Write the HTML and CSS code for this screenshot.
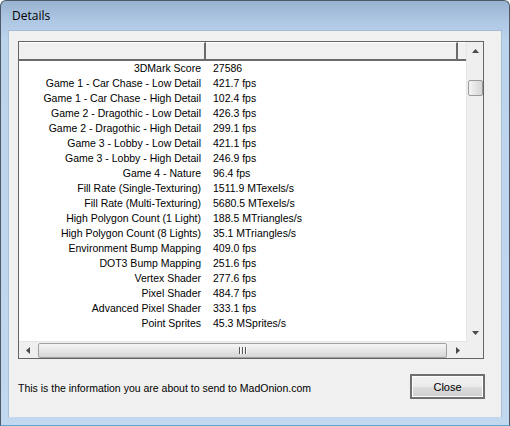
FILE: index.html
```html
<!DOCTYPE html>
<html>
<head>
<meta charset="utf-8">
<link rel="stylesheet" href="styles.css">
</head>
<body>
<div class="window">
  <div class="titlebar"><span class="title">Details</span></div>
  <div class="client">
    <div class="list">
      <div class="content">
        <div class="header">
          <div class="hcell c1"></div>
          <div class="hcell c2"></div>
          <div class="hcell c3"></div>
        </div>
        <div class="rows">
          <div class="row"><span class="k">3DMark Score</span><span class="v">27586</span></div>
          <div class="row"><span class="k">Game 1 - Car Chase - Low Detail</span><span class="v">421.7 fps</span></div>
          <div class="row"><span class="k">Game 1 - Car Chase - High Detail</span><span class="v">102.4 fps</span></div>
          <div class="row"><span class="k">Game 2 - Dragothic - Low Detail</span><span class="v">426.3 fps</span></div>
          <div class="row"><span class="k">Game 2 - Dragothic - High Detail</span><span class="v">299.1 fps</span></div>
          <div class="row"><span class="k">Game 3 - Lobby - Low Detail</span><span class="v">421.1 fps</span></div>
          <div class="row"><span class="k">Game 3 - Lobby - High Detail</span><span class="v">246.9 fps</span></div>
          <div class="row"><span class="k">Game 4 - Nature</span><span class="v">96.4 fps</span></div>
          <div class="row"><span class="k">Fill Rate (Single-Texturing)</span><span class="v">1511.9 MTexels/s</span></div>
          <div class="row"><span class="k">Fill Rate (Multi-Texturing)</span><span class="v">5680.5 MTexels/s</span></div>
          <div class="row"><span class="k">High Polygon Count (1 Light)</span><span class="v">188.5 MTriangles/s</span></div>
          <div class="row"><span class="k">High Polygon Count (8 Lights)</span><span class="v">35.1 MTriangles/s</span></div>
          <div class="row"><span class="k">Environment Bump Mapping</span><span class="v">409.0 fps</span></div>
          <div class="row"><span class="k">DOT3 Bump Mapping</span><span class="v">251.6 fps</span></div>
          <div class="row"><span class="k">Vertex Shader</span><span class="v">277.6 fps</span></div>
          <div class="row"><span class="k">Pixel Shader</span><span class="v">484.7 fps</span></div>
          <div class="row"><span class="k">Advanced Pixel Shader</span><span class="v">333.1 fps</span></div>
          <div class="row"><span class="k">Point Sprites</span><span class="v">45.3 MSprites/s</span></div>
        </div>
      </div>
      <div class="vscroll">
        <div class="sbtn"><svg width="7" height="4" viewBox="0 0 7 4"><path d="M3.5 0 L7 4 L0 4 Z" fill="#4a4a4a"/></svg></div>
        <div class="vtrack"><div class="vthumb"></div></div>
        <div class="sbtn"><svg width="7" height="4" viewBox="0 0 7 4"><path d="M0 0 L7 0 L3.5 4 Z" fill="#4a4a4a"/></svg></div>
      </div>
      <div class="hscroll">
        <div class="sbtn h"><svg width="4" height="7" viewBox="0 0 4 7"><path d="M4 0 L4 7 L0 3.5 Z" fill="#4a4a4a"/></svg></div>
        <div class="htrack"><div class="hthumb"><span class="grip"><i></i><i></i><i></i></span></div></div>
        <div class="sbtn h"><svg width="4" height="7" viewBox="0 0 4 7"><path d="M0 0 L4 3.5 L0 7 Z" fill="#4a4a4a"/></svg></div>
      </div>
      <div class="corner"></div>
    </div>
    <div class="footer">
      <span class="info">This is the information you are about to send to MadOnion.com</span>
      <button class="close">Close</button>
    </div>
  </div>
</div>
</body>
</html>
```

FILE: styles.css
```css
html, body {
  margin: 0;
  padding: 0;
  background: #ffffff;
}
body {
  width: 510px;
  height: 426px;
  overflow: hidden;
  font-family: "Liberation Sans", Arial, sans-serif;
  font-size: 10.5px;
  color: #000;
}
.window {
  box-sizing: border-box;
  width: 510px;
  height: 426px;
  border: 1px solid #4d5967;
  border-bottom-color: #5aa7cf;
  border-radius: 6px 6px 0 0;
  background: linear-gradient(to bottom, #98b3d2 0px, #aec7e3 20px, #bcd3ec 40px, #c2d8ef 100%);
  display: flex;
  flex-direction: column;
  padding: 0 7px 8px 7px;
}
.titlebar {
  height: 29px;
  display: flex;
  align-items: center;
  padding-left: 4px;
  flex: none;
}
.title {
  font-family: "Open Sans", "Liberation Sans", Arial, sans-serif;
  font-size: 12px;
  color: #000;
  padding-bottom: 1px;
}
.client {
  flex: 1;
  background: #f0f0f0;
  border: 1px solid #a8bfd8;
  border-top: 1px solid #a5bcd6;
  border-bottom: none;
  display: flex;
  flex-direction: column;
  padding: 10px 17px 0 9px;
}
.list {
  box-sizing: border-box;
  width: 466px;
  height: 318px;
  border: 1px solid #646464;
  background: #fff;
  display: grid;
  grid-template-columns: 447px 17px;
  grid-template-rows: 299px 17px;
}
.content {
  overflow: hidden;
  display: flex;
  flex-direction: column;
}
.header {
  display: flex;
  height: 19px;
  flex: none;
  box-sizing: border-box;
  border-bottom: 2px solid #6a6a6a;
  background: #f0f0f0;
}
.hcell {
  box-sizing: border-box;
  height: 17px;
  border-right: 2px solid #6a6a6a;
  border-top: 1px solid #ffffff;
}
.c1 { width: 187px; }
.c2 { width: 252px; }
.c3 { flex: 1; border-right: none; }
.rows {
  display: flex;
  flex-direction: column;
}
.row {
  display: flex;
  height: 15px;
  line-height: 15px;
  white-space: nowrap;
}
.row .k {
  width: 187px;
  box-sizing: border-box;
  text-align: right;
  padding-right: 5px;
}
.row .v {
  padding-left: 7px;
}
.vscroll {
  background: #efefef;
  border-left: 1px solid #e6e6e6;
  box-sizing: border-box;
  display: flex;
  flex-direction: column;
}
.sbtn {
  width: 16px;
  height: 17px;
  display: flex;
  align-items: center;
  justify-content: center;
  flex: none;
}
.sbtn.h {
  width: 17px;
  height: 16px;
}
.vtrack {
  flex: 1;
  padding-top: 21px;
  display: flex;
  justify-content: center;
}
.vthumb {
  box-sizing: border-box;
  width: 15px;
  height: 16px;
  border: 1px solid #9a9a9a;
  border-radius: 2px;
  background: linear-gradient(to right, #f4f4f4, #e2e2e2 60%, #d4d4d4);
}
.hscroll {
  background: #efefef;
  border-top: 1px solid #e6e6e6;
  box-sizing: border-box;
  display: flex;
  align-items: center;
}
.htrack {
  flex: 1;
  display: flex;
  padding: 0 2px;
}
.hthumb {
  box-sizing: border-box;
  flex: 1;
  height: 15px;
  border: 1px solid #a0a0a0;
  border-radius: 2px;
  background: linear-gradient(to bottom, #f5f5f5, #e6e6e6 50%, #d6d6d6);
  display: flex;
  align-items: center;
  justify-content: center;
}
.grip {
  display: flex;
  gap: 1px;
}
.grip i {
  display: block;
  width: 1px;
  height: 7px;
  background: #555;
  border-right: 1px solid #fff;
}
.corner {
  background: #efefef;
}
.footer {
  display: flex;
  align-items: center;
  justify-content: space-between;
  margin-top: 15px;
}
.info {
  padding-top: 3px;
  padding-left: 0px;
}
.close {
  width: 75px;
  height: 25px;
  font-family: "Liberation Sans", Arial, sans-serif;
  font-size: 11px;
  color: #000;
  border: 2px solid #6f6f6f;
  border-radius: 0;
  background: linear-gradient(to bottom, #f2f2f2, #ebebeb 50%, #dddddd 51%, #cfcfcf);
  padding: 0;
  margin-right: -1px;
  box-shadow: inset 0 0 0 1px #fcfcfc;
}
```
